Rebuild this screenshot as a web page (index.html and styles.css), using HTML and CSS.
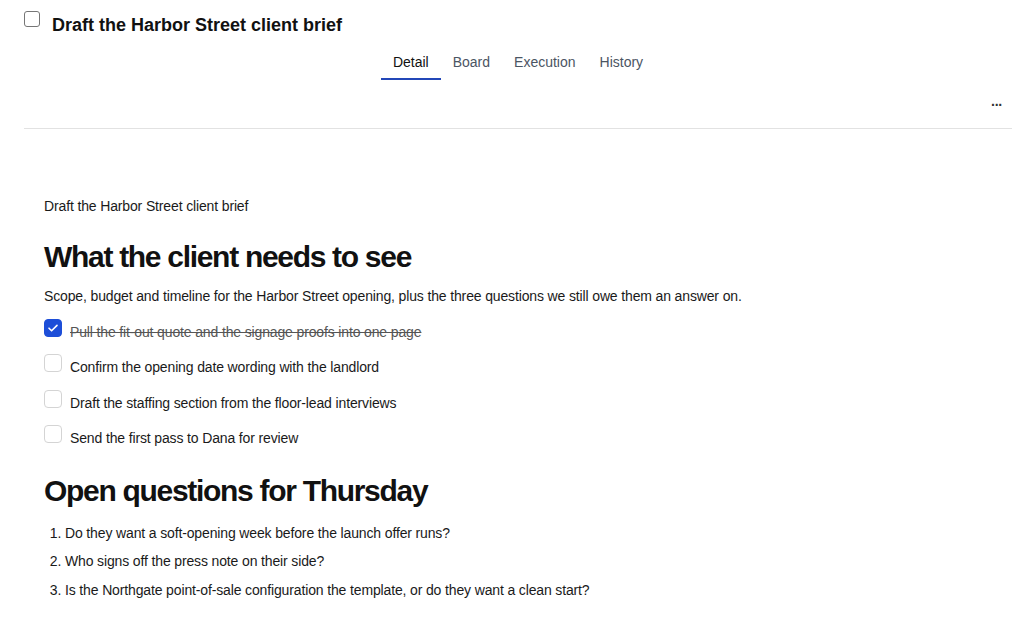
FILE: index.html
```html
<!DOCTYPE html>
<html>
<head>
<meta charset="utf-8">
<link rel="stylesheet" href="styles.css">
</head>
<body>
<div class="page">
  <header class="header">
    <div class="title-row">
      <span class="title-check"></span>
      <h1 class="title">Draft the Harbor Street client brief</h1>
    </div>
    <nav class="tabs">
      <span class="tab active">Detail</span>
      <span class="tab">Board</span>
      <span class="tab">Execution</span>
      <span class="tab">History</span>
    </nav>
    <div class="toolbar">
      <span class="more">&middot;&middot;&middot;</span>
    </div>
  </header>
  <main class="doc">
    <p class="lead">Draft the Harbor Street client brief</p>
    <h2 class="heading first">What the client needs to see</h2>
    <p class="para">Scope, budget and timeline for the Harbor Street opening, plus the three questions we still owe them an answer on.</p>
    <ul class="checklist">
      <li class="item done">
        <span class="box checked"><svg viewBox="0 0 18 18" width="18" height="18"><path d="M5 9.2l2.6 2.6L13 6.4" fill="none" stroke="#fff" stroke-width="1.6" stroke-linecap="round" stroke-linejoin="round"/></svg></span>
        <span class="item-text">Pull the fit-out quote and the signage proofs into one page</span>
      </li>
      <li class="item">
        <span class="box"></span>
        <span class="item-text">Confirm the opening date wording with the landlord</span>
      </li>
      <li class="item">
        <span class="box"></span>
        <span class="item-text">Draft the staffing section from the floor-lead interviews</span>
      </li>
      <li class="item">
        <span class="box"></span>
        <span class="item-text">Send the first pass to Dana for review</span>
      </li>
    </ul>
    <h2 class="heading second">Open questions for Thursday</h2>
    <ol class="questions">
      <li>Do they want a soft-opening week before the launch offer runs?</li>
      <li>Who signs off the press note on their side?</li>
      <li>Is the Northgate point-of-sale configuration the template, or do they want a clean start?</li>
    </ol>
  </main>
</div>
</body>
</html>
```
FILE: styles.css
```css
* { box-sizing: border-box; }
body {
  margin: 0;
  background: #fff;
  font-family: "Liberation Sans", Arial, sans-serif;
  color: #1a1a1a;
}
.page { padding: 0 24px; }
.header {
  border-bottom: 1px solid #e2e2e2;
}
.title-row {
  display: flex;
  align-items: flex-start;
  gap: 12px;
  padding-top: 11px;
}
.title-check {
  width: 16px;
  height: 16px;
  border: 1px solid #767676;
  border-radius: 3px;
  flex: none;
}
.title {
  margin: 0;
  font-size: 18px;
  font-weight: 700;
  line-height: 26px;
  padding-top: 1px;
  color: #111;
}
.tabs {
  display: flex;
  justify-content: center;
  margin-top: 13px;
}
.tab {
  padding: 2px 12px 7px;
  font-size: 14px;
  line-height: 18px;
  color: #4b5563;
  border-bottom: 2px solid transparent;
}
.tab.active {
  color: #111;
  border-bottom-color: #2347b8;
}
.toolbar {
  display: flex;
  justify-content: flex-end;
  padding: 18px 10px 0 0;
  height: 48px;
}
.more {
  font-size: 14px;
  font-weight: 700;
  letter-spacing: -1px;
  line-height: 14px;
  color: #333;
}
.doc {
  padding: 0 20px;
  padding-top: 68px;
  letter-spacing: -0.14px;
}
.lead {
  margin: 0;
  font-size: 14px;
  line-height: 18px;
}
.heading {
  margin: 0;
  font-size: 30px;
  line-height: 38px;
  font-weight: 700;
  letter-spacing: -1.3px;
  color: #111;
}
.heading.first { margin-top: 23px; }
.heading.second { margin-top: 11px; }
.para {
  margin: 10px 0 0;
  font-size: 14px;
  line-height: 20px;
}
.checklist {
  list-style: none;
  margin: 13px 0 0;
  padding: 0;
}
.item {
  display: flex;
  align-items: flex-start;
  gap: 8px;
  min-height: 35.4px;
}
.box {
  width: 18px;
  height: 18px;
  border: 1.5px solid #d4d4d4;
  border-radius: 4px;
  flex: none;
  background: #fff;
}
.box.checked {
  background: #1d4ed8;
  border-color: #1d4ed8;
  display: flex;
  align-items: center;
  justify-content: center;
}
.box.checked svg { display: block; margin: -1.5px; }
.item-text {
  font-size: 14px;
  line-height: 20px;
  padding-top: 3px;
}
.item.done .item-text {
  text-decoration: line-through;
  color: #555;
}
.questions {
  margin: 13px 0 0;
  padding-left: 21px;
  font-size: 14px;
  line-height: 20px;
}
.questions li { margin-bottom: 8.5px; }
```
